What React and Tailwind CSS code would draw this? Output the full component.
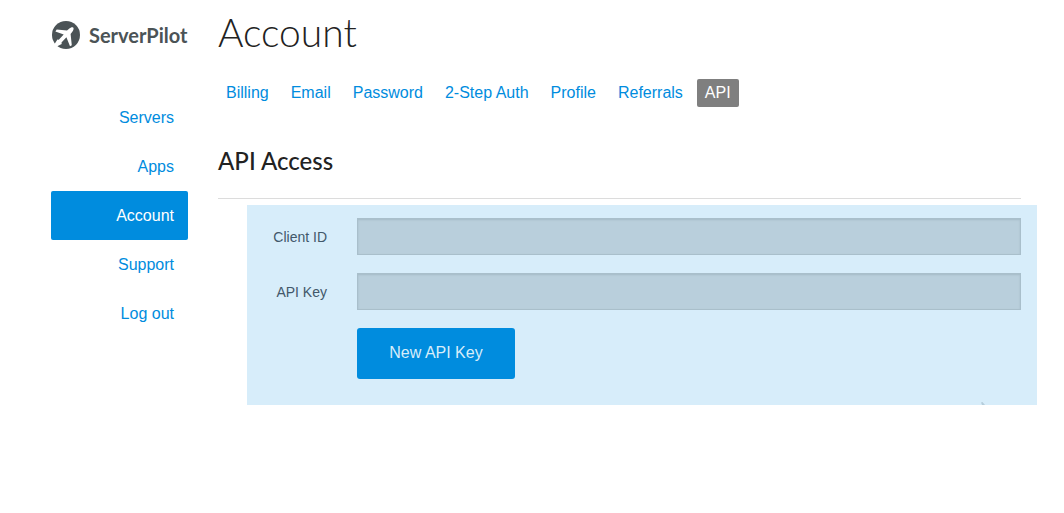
const NAV = ['Servers', 'Apps', 'Account', 'Support', 'Log out'];
const TABS = ['Billing', 'Email', 'Password', '2-Step Auth', 'Profile', 'Referrals', 'API'];

function Logo() {
  return (
    <a href="#home" className="flex h-7 items-center gap-[9px] pl-px text-[#4b5356]">
      <svg viewBox="0 0 28 28" className="size-7 shrink-0" aria-hidden="true">
        <circle cx="14" cy="14" r="14" fill="currentColor" />
        <path
          fill="#fff"
          d="M21.2 6.6c.9 1 .2 2.7-.7 3.8L18.6 13l1.2 11.3-1.8.9-3.6-9-4.9 5.2.2 1.6-4.9 2.6-2.4-2.3 3-4.8 1.4.3 4.9-5.2-8.3-3.1 1.3-1.9 10.3.8 2.4-2c1.2-1 2.9-1.8 3.8-.8Z"
        />
      </svg>
      <span className="font-[Lato,sans-serif] text-xl leading-7 font-bold">ServerPilot</span>
    </a>
  );
}

function Field({ id, label }) {
  return (
    <div className="flex items-center gap-[30px]">
      <label htmlFor={id} className="w-20 shrink-0 text-right text-sm text-[#42586a]">
        {label}
      </label>
      <input
        id={id}
        type="text"
        readOnly
        className="h-[37px] min-w-0 flex-1 border border-[#a9bfcb] bg-[#b9cfdc] px-2 text-sm shadow-[inset_0_1px_2px_#a5bbc7] outline-none"
      />
    </div>
  );
}

export default function App() {
  return (
    <div className="flex min-h-screen gap-[30px] bg-white pr-[27px] pl-[51px] font-['Liberation_Sans',Arial,sans-serif] text-base text-[#222]">
      <aside className="w-[137px] shrink-0 pt-[21px]">
        <Logo />
        <nav className="mt-11 flex flex-col" aria-label="Main">
          {NAV.map((item) => (
            <a
              key={item}
              href={`#${item}`}
              className={`flex h-[49px] items-center justify-end rounded-xs pr-3.5 ${
                item === 'Account' ? 'bg-[#008cde] text-white' : 'text-[#008cde]'
              }`}
            >
              {item}
            </a>
          ))}
        </nav>
      </aside>

      <main className="min-w-0 flex-1 pt-1.5">
        <div className="mr-4 border-b border-[#dcdcdc] pb-[21px]">
          <h1 className="font-[Lato,sans-serif] text-[39px] leading-[52px] font-light">Account</h1>
          <nav className="mt-[21px] flex gap-1.5 whitespace-nowrap" aria-label="Account sections">
            {TABS.map((tab) => (
              <a
                key={tab}
                href={`#${tab}`}
                className={`h-7 rounded-xs px-2 leading-7 ${
                  tab === 'API' ? 'bg-[#7f7f7f] text-white' : 'text-[#008cde]'
                }`}
              >
                {tab}
              </a>
            ))}
          </nav>
          <h2 className="mt-[38px] font-[Lato,sans-serif] text-2xl leading-8 font-medium">API Access</h2>
        </div>

        <form
          className="relative mt-1.5 ml-[29px] flex h-[200px] flex-col gap-[18px] overflow-hidden bg-[#d7edfa] pt-[13px] pr-4"
          onSubmit={(event) => event.preventDefault()}
        >
          <Field id="client-id" label="Client ID" />
          <Field id="api-key" label="API Key" />
          <button
            type="submit"
            className="ml-[110px] h-[51px] w-[158px] rounded-[3px] bg-[#008cde] pb-0.5 text-[#d7edfa]"
          >
            New API Key
          </button>
          <svg viewBox="0 0 8 4" className="absolute right-[50px] bottom-0 h-1 w-2" aria-hidden="true">
            <path d="M2 1.5 3.5 1 6 4H3Z" fill="#b5cddb" />
          </svg>
        </form>
      </main>
    </div>
  );
}
